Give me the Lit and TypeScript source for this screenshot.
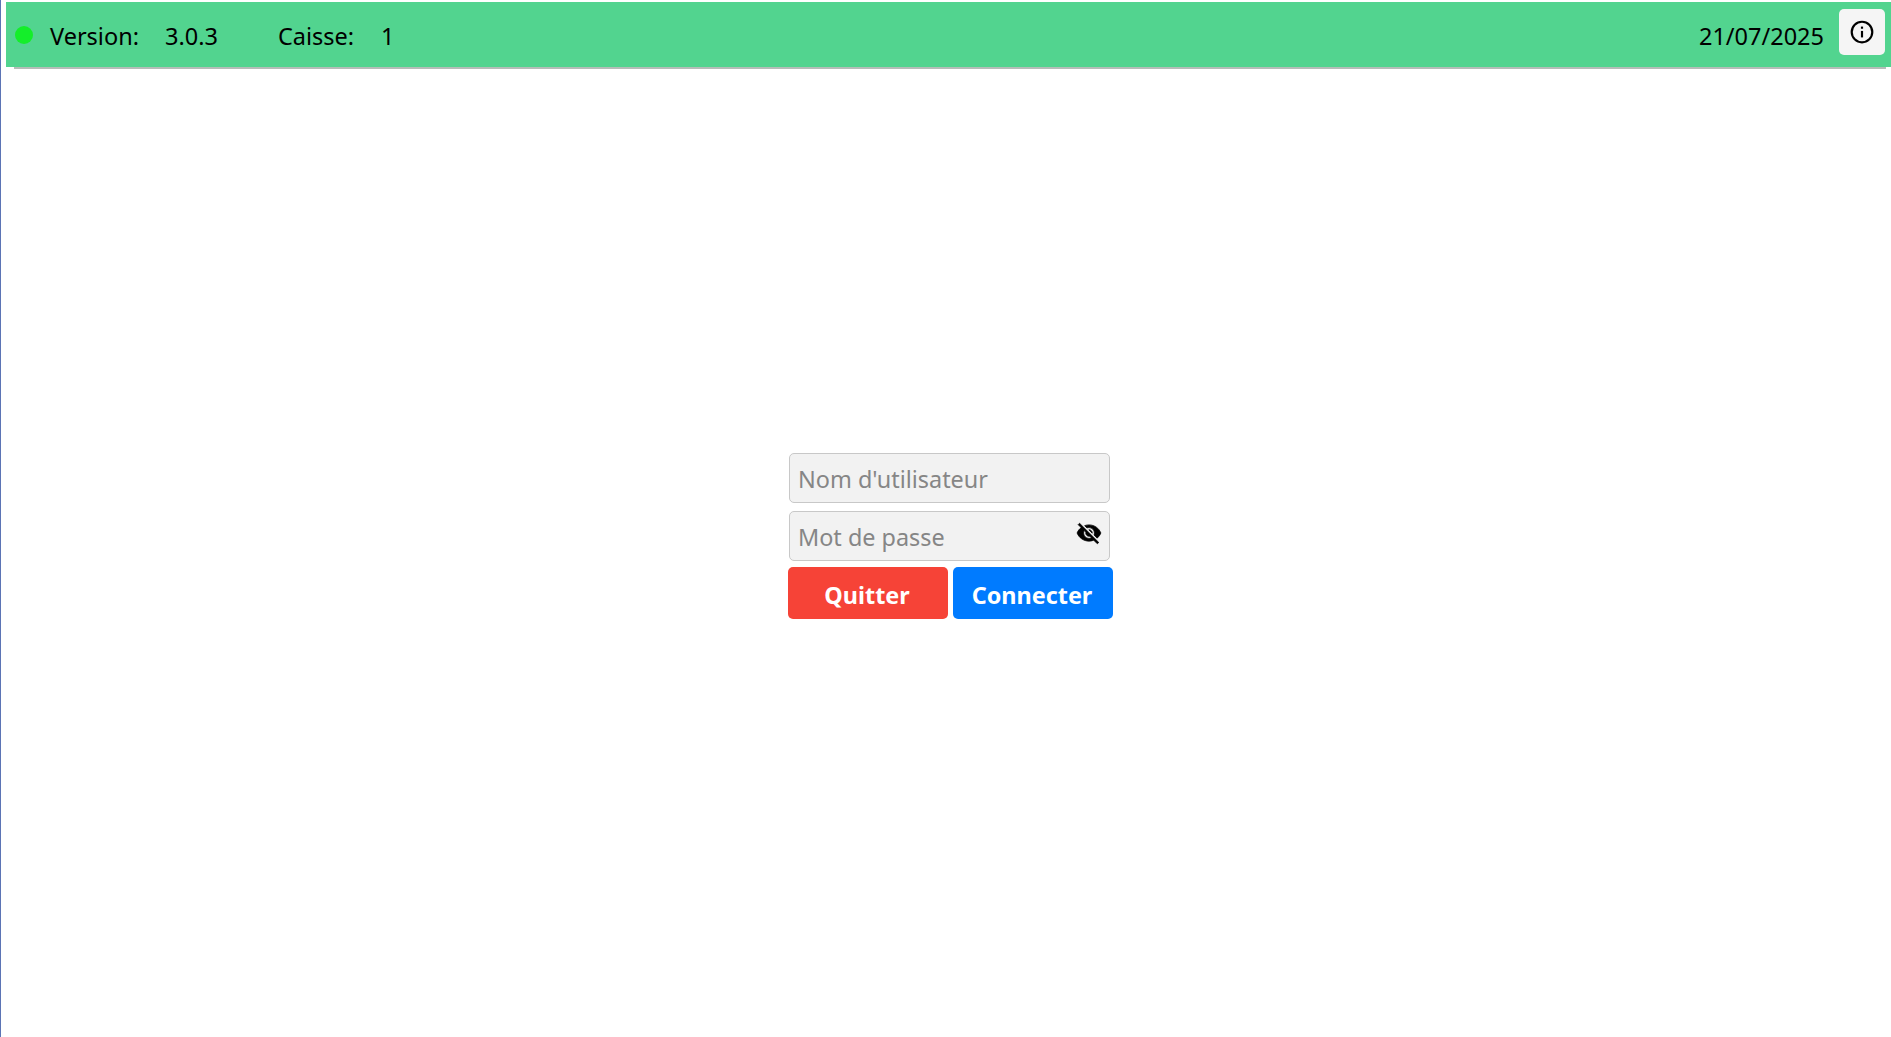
import { LitElement, html, css } from "lit";
import { customElement } from "lit/decorators.js";

@customElement("app-root")
export class AppRoot extends LitElement {
  static styles = css`
    :host { display: block; height: 1037px; box-sizing: border-box; border-left: 1px solid #5b74b5; background: #fff; font-family: "Noto Sans", sans-serif; color: #000; overflow: hidden; padding: 2px 0 0 5px; }
    .bar { height: 65px; background: #52d48f; display: flex; align-items: center; padding: 0 6px 0 9px; }
    .shadow { height: 2px; background: #b5bdb8; margin: 0 5px 0 8px; }
    .dot { width: 18px; height: 18px; border-radius: 50%; background: #14ee2a; margin: 0; }
    .t { font-size: 23.5px; line-height: 32px; white-space: pre; margin-top: 2px; }
    .v1 { margin-left: 17px; }
    .v2 { margin-left: 26px; }
    .c1 { margin-left: 60px; }
    .c2 { margin-left: 27px; }
    .spacer { flex: 1; }
    .info { width: 46px; height: 46px; margin: -6px 0 0 15px; border-radius: 5px; background: #f5f5f5; display: flex; align-items: center; justify-content: center; border: none; padding: 0; }
    .info svg { width: 26px; height: 26px; display: block; }
    .main { display: flex; justify-content: center; padding: 384px 0 0 4px; }
    .form { width: 325px; display: flex; flex-direction: column; }
    .field { width: 321px; height: 50px; box-sizing: border-box; margin: 0 0 8px 1px; background: #f2f2f2; border: 1px solid #c8c8c8; border-radius: 5px; display: flex; align-items: center; padding: 0 8px; color: #868686; font-size: 23.4px; position: relative; }
    .field span { margin-top: 2px; }
    .eye { position: absolute; right: 7px; top: 8px; width: 26px; height: 26px; }
    .buttons { display: flex; gap: 5px; margin-top: -2px; }
    .btn { flex: 1; height: 52px; border: none; border-radius: 5px; color: #fff; font: 700 23.4px "Noto Sans", sans-serif; padding: 4px 2px 0 0; }
    .quit { background: #f64337; }
    .conn { background: #007bff; }
  `;

  render() {
    return html`
      <div class="bar">
        <div class="dot"></div>
        <span class="t v1">Version:</span><span class="t v2">3.0.3</span>
        <span class="t c1">Caisse:</span><span class="t c2">1</span>
        <div class="spacer"></div>
        <span class="t">21/07/2025</span>
        <button class="info" aria-label="Informations">
          <svg viewBox="0 0 24 24" fill="none"><circle cx="12" cy="12" r="9.5" stroke="#000" stroke-width="2"/><rect x="11" y="11" width="2" height="6" fill="#000"/><rect x="11" y="7" width="2" height="2" fill="#000"/></svg>
        </button>
      </div>
      <div class="shadow"></div>
      <div class="main">
        <div class="form">
          <div class="field"><span>Nom d'utilisateur</span></div>
          <div class="field"><span>Mot de passe</span>
            <svg class="eye" viewBox="0 0 24 24" fill="#000" stroke="#000" stroke-width="0.7"><path d="M12 7c2.76 0 5 2.24 5 5 0 .65-.13 1.26-.36 1.83l2.92 2.92c1.51-1.26 2.7-2.89 3.43-4.75-1.73-4.39-6-7.5-11-7.5-1.4 0-2.74.25-3.98.7l2.16 2.16C10.74 7.13 11.35 7 12 7zM2 4.27l2.28 2.28.46.46C3.08 8.3 1.78 10.02 1 12c1.73 4.39 6 7.5 11 7.5 1.55 0 3.03-.3 4.38-.84l.42.42L19.73 22 21 20.73 3.27 3 2 4.27zM7.53 9.8l1.55 1.55c-.05.21-.08.43-.08.65 0 1.66 1.34 3 3 3 .22 0 .44-.03.65-.08l1.55 1.55c-.67.33-1.41.53-2.2.53-2.76 0-5-2.24-5-5 0-.79.2-1.53.53-2.2zm4.31-.78l3.15 3.15.02-.16c0-1.66-1.34-3-3-3l-.17.01z"/></svg>
          </div>
          <div class="buttons">
            <button class="btn quit">Quitter</button>
            <button class="btn conn">Connecter</button>
          </div>
        </div>
      </div>
    `;
  }
}
